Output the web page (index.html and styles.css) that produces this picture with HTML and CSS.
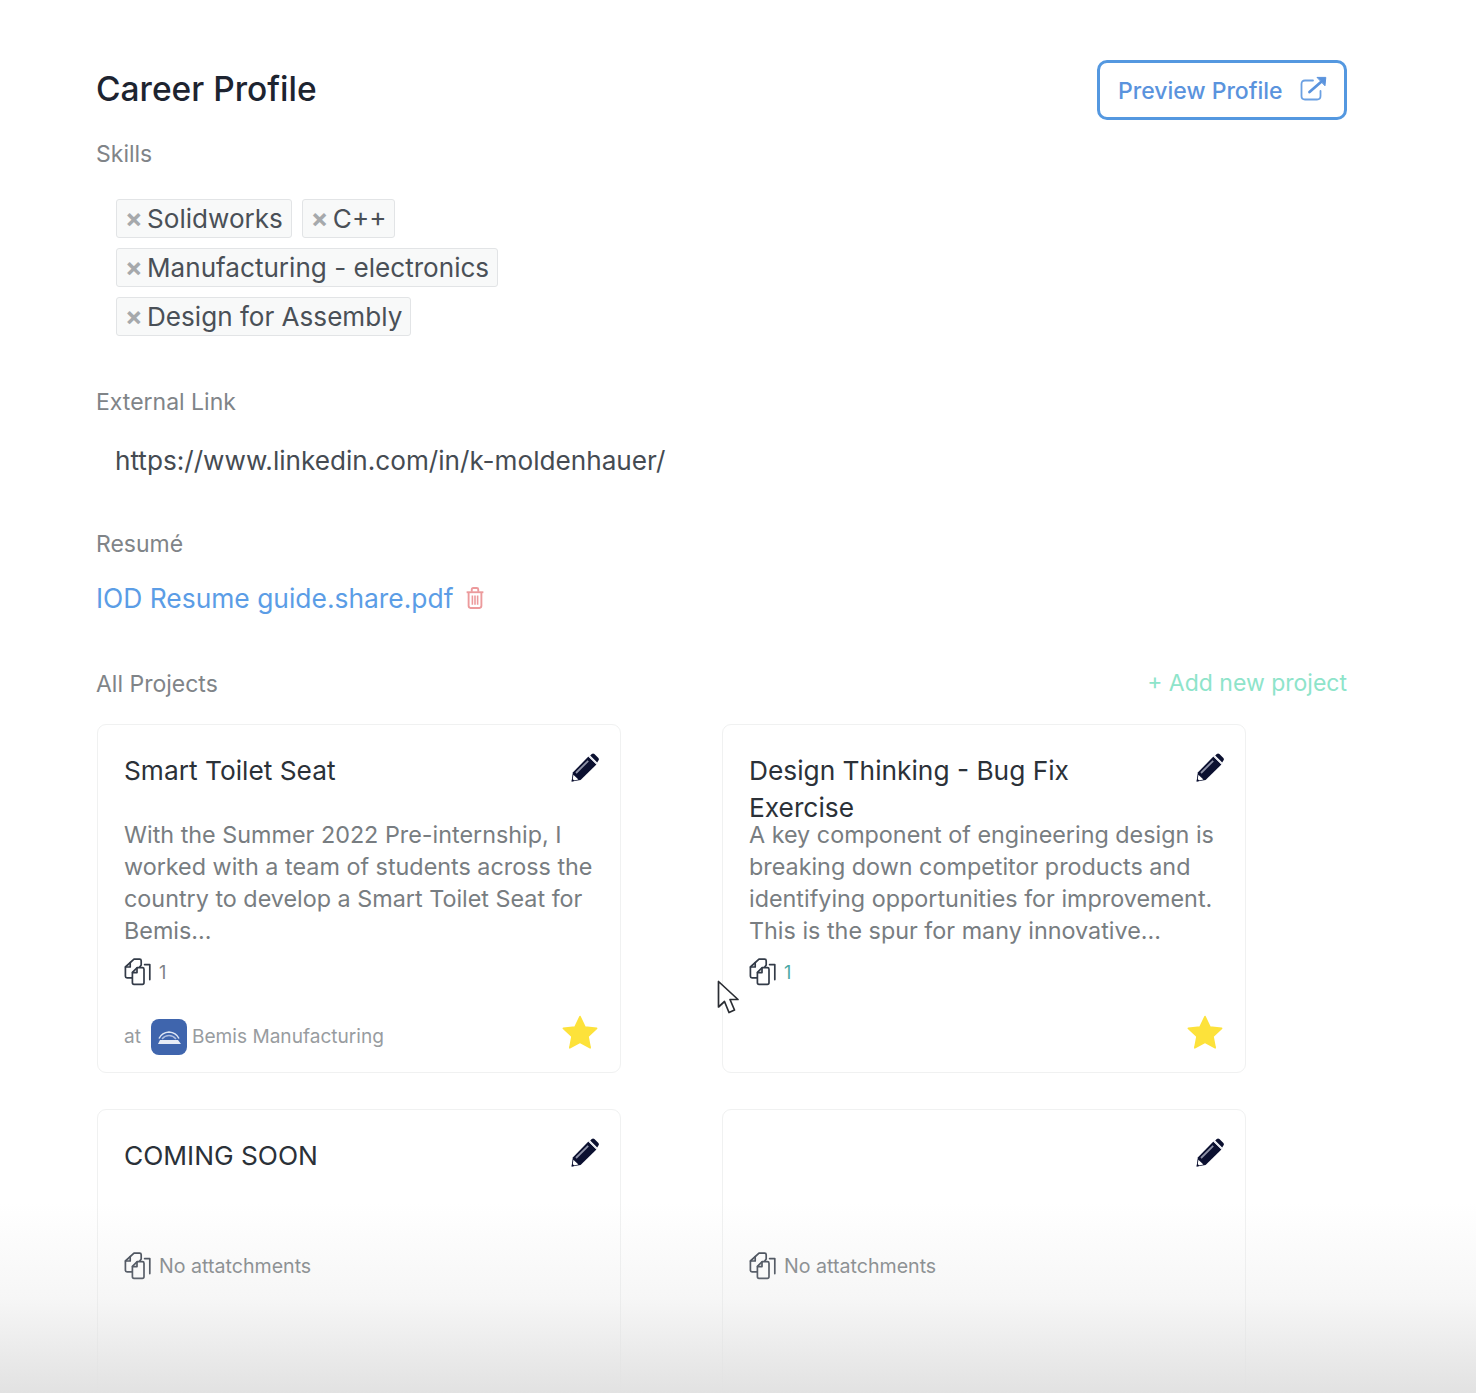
FILE: index.html
```html
<!DOCTYPE html>
<html lang="en">
<head>
<meta charset="utf-8">
<title>Career Profile</title>
<link rel="stylesheet" href="styles.css">
</head>
<body>
<svg class="defs" width="0" height="0" aria-hidden="true">
  <symbol id="pencil" viewBox="0 0 28 29">
    <path d="M0.6 28.6 L1.8 19.4 L17.4 3.6 L25.4 11.4 L9.6 27 Z" fill="#0b1030"/>
    <path d="M19.2 2.6 L20.8 1 Q22 0 23.4 1 L27.4 5 Q28.4 6.4 27.4 7.6 L26.2 9.6 Z" fill="#0b1030"/>
    <path d="M17.6 3 L26 11" stroke="#e4e6ee" stroke-width="1.2"/>
    <path d="M5 20 L17.2 7.8" stroke="#8f93a8" stroke-width="1.8"/>
    <path d="M2.4 21.8 L7.4 26.4 L1.6 27.8 Z" fill="#fff"/>
    <path d="M0.6 28.6 L1.2 25.6 L3.6 27.9 Z" fill="#0b1030"/>
  </symbol>
  <symbol id="files" viewBox="0 0 28 28">
    <g fill="none" stroke="#333b48" stroke-width="1.7" stroke-linejoin="round" stroke-linecap="round">
      <path d="M10 1.2 H15.6 Q17.2 1.2 17.2 2.8 V7 L8.2 19.8 H3 Q1.4 19.8 1.4 18.2 V9 Z" fill="#fff"/>
      <path d="M6.2 4.6 V9 H1.6"/>
      <path d="M13.2 9.6 L8.4 14.4 V24.6 Q8.4 26.4 10 26.4 H18.4 Q20 26.4 20 24.6 V11.2 Q20 9.6 18.4 9.6 Z" fill="#fff"/>
      <path d="M13 10 V14.6 H8.6"/>
      <path d="M20.6 6.6 H25.8 V21.6"/>
    </g>
  </symbol>
  <symbol id="star" viewBox="0 0 36 35">
    <path d="M18 1.5 L23 12 L34.6 13.4 L26 21.4 L28.2 32.8 L18 27.2 L7.8 32.8 L10 21.4 L1.4 13.4 L13 12 Z" fill="#fde23a" stroke="#fde23a" stroke-width="1.6" stroke-linejoin="round"/>
  </symbol>
</svg>

<main class="page">
  <header class="top">
    <h1 class="title">Career Profile</h1>
    <a class="preview" href="#">
      <span>Preview Profile</span>
      <svg class="preview-icon" viewBox="0 0 27 25" fill="none" stroke="#6ba0e2" stroke-width="1.8" stroke-linecap="round" stroke-linejoin="round">
        <path d="M13 4.5 H5 Q1.5 4.5 1.5 8 V20 Q1.5 23.5 5 23.5 H17 Q20.5 23.5 20.5 20 V15"/>
        <path d="M9.5 16 L21 6" stroke="#5a93dd" stroke-width="2.8"/>
        <path d="M17.4 1.4 L25.8 1.4 L25 9.4 Z" fill="#5a93dd" stroke="#5a93dd" stroke-width="1"/>
      </svg>
    </a>
  </header>

  <section class="skills">
    <div class="label">Skills</div>
    <div class="tags">
      <div class="tag-row">
        <span class="tag"><span class="tag-x">×</span>Solidworks</span>
        <span class="tag"><span class="tag-x">×</span>C++</span>
      </div>
      <div class="tag-row">
        <span class="tag"><span class="tag-x">×</span>Manufacturing - electronics</span>
      </div>
      <div class="tag-row">
        <span class="tag"><span class="tag-x">×</span>Design for Assembly</span>
      </div>
    </div>
  </section>

  <section class="external">
    <div class="label">External Link</div>
    <div class="url">https://www.linkedin.com/in/k-moldenhauer/</div>
  </section>

  <section class="resume">
    <div class="label">Resumé</div>
    <div class="resume-row">
      <a class="resume-link" href="#">IOD Resume guide.share.pdf</a>
      <svg class="trash" viewBox="0 0 17 21" fill="none" stroke="#ec9a9c" stroke-width="1.8" stroke-linejoin="round">
        <path d="M0.5 5 H16.5"/>
        <path d="M5.4 4.6 V2.4 Q5.4 1 6.8 1 H10.2 Q11.6 1 11.6 2.4 V4.6"/>
        <path d="M2.4 5 V18 Q2.4 20 4.2 20 H12.8 Q14.6 20 14.6 18 V5"/>
        <path d="M6 8 V17 M8.5 8 V17 M11 8 V17" stroke-width="1.5"/>
      </svg>
    </div>
  </section>

  <div class="projects-head">
    <div class="label">All Projects</div>
    <a class="add" href="#">+ Add new project</a>
  </div>

  <section class="cards">
    <article class="card">
      <div class="card-head">
        <h2 class="card-title">Smart Toilet Seat</h2>
        <svg class="pencil"><use href="#pencil"/></svg>
      </div>
      <p class="desc">With the Summer 2022 Pre-internship, I worked with a team of students across the country to develop a Smart Toilet Seat for Bemis...</p>
      <div class="attach"><svg class="files"><use href="#files"/></svg><span class="attach-count">1</span></div>
      <div class="card-foot">
        <div class="company">
          <span class="company-at">at</span>
          <svg class="logo" viewBox="0 0 36 36">
            <rect width="36" height="36" rx="8" fill="#3f65ad"/>
            <path d="M8 19.5 Q11 13.5 18 13 Q25 13.5 28 19.5" fill="none" stroke="#dfe6f4" stroke-width="1.5"/>
            <path d="M11 20 Q14 16.5 18 16.5 Q22 16.5 25 20" fill="none" stroke="#aebee0" stroke-width="1.4"/>
            <path d="M7 25 L9 21 H27 L30 25 Z" fill="#e7ecf6"/>
          </svg>
          <span>Bemis Manufacturing</span>
        </div>
        <svg class="star"><use href="#star"/></svg>
      </div>
    </article>

    <article class="card">
      <div class="card-head">
        <h2 class="card-title">Design Thinking - Bug Fix Exercise</h2>
        <svg class="pencil"><use href="#pencil"/></svg>
      </div>
      <p class="desc">A key component of engineering design is breaking down competitor products and identifying opportunities for improvement. This is the spur for many innovative...</p>
      <div class="attach"><svg class="files"><use href="#files"/></svg><span class="attach-count teal">1</span></div>
      <div class="card-foot">
        <div class="company"></div>
        <svg class="star"><use href="#star"/></svg>
      </div>
    </article>

    <article class="card">
      <div class="card-head">
        <h2 class="card-title">COMING SOON</h2>
        <svg class="pencil"><use href="#pencil"/></svg>
      </div>
      <p class="desc desc-empty"></p>
      <div class="attach"><svg class="files"><use href="#files"/></svg><span class="attach-none">No attatchments</span></div>
    </article>

    <article class="card">
      <div class="card-head">
        <h2 class="card-title"></h2>
        <svg class="pencil"><use href="#pencil"/></svg>
      </div>
      <p class="desc desc-empty"></p>
      <div class="attach"><svg class="files"><use href="#files"/></svg><span class="attach-none">No attatchments</span></div>
    </article>
  </section>
</main>

<svg class="cursor" viewBox="0 0 24 36">
  <path d="M1.5 1.5 V27 L7.5 21.5 L12 32.5 L17.5 30 L13 19.5 H21 Z" fill="#fff" stroke="#2a2d33" stroke-width="1.7" stroke-linejoin="round"/>
</svg>
<div class="fade"></div>
</body>
</html>
```
FILE: styles.css
```css
* { box-sizing: border-box; }
html, body {
  margin: 0;
  height: 1393px;
  overflow: hidden;
  background: #fff;
}
body {
  font-family: Inter, "Liberation Sans", sans-serif;
  color: #2b3138;
  position: relative;
}
.defs { position: absolute; }
.page { padding: 60px 129px 0 96px; }

.top {
  display: flex;
  justify-content: space-between;
  align-items: center;
  height: 60px;
}
.title {
  margin: -3px 0 0;
  font-size: 33.5px;
  font-weight: 500;
  color: #1d2430;
}
.preview {
  display: flex;
  align-items: center;
  gap: 18px;
  width: 250px;
  height: 60px;
  padding: 2px 0 0 18px;
  border: 3px solid #5498e0;
  border-radius: 10px;
  color: #5a93dd;
  font-size: 23px;
  font-weight: 500;
  text-decoration: none;
}
.preview-icon { width: 27px; height: 25px; margin-top: -5px; margin-left: -1px; }

.label {
  font-size: 23px;
  line-height: 28px;
  color: #808488;
}
.skills { margin-top: 20px; }
.tags {
  margin-top: 31px;
  padding-left: 20px;
  display: flex;
  flex-direction: column;
  gap: 10px;
}
.tag-row { display: flex; gap: 10px; }
.tag {
  display: flex;
  align-items: center;
  height: 39px;
  padding: 0 8px 0 9px;
  background: #f8f9f9;
  border: 1px solid #e2e4e6;
  border-radius: 3px;
  font-size: 26.1px;
  color: #4a5057;
}
.tag-x {
  width: 21px;
  margin-left: -1px;
  margin-right: 1px;
  font-size: 26px;
  font-weight: 700;
  color: #a6a9ac;
}

.external { margin-top: 52px; }
.url {
  margin-top: 28px;
  padding-left: 19px;
  font-size: 26.15px;
  line-height: 34px;
  color: #454b52;
}
.resume { margin-top: 52px; }
.resume-row {
  display: flex;
  align-items: center;
  gap: 13px;
  margin-top: 22px;
  height: 36px;
}
.resume-link {
  font-size: 26.4px;
  color: #5b9de6;
  text-decoration: none;
}
.trash { width: 18px; height: 22px; }

.projects-head {
  display: flex;
  justify-content: space-between;
  margin-top: 54px;
}
.add {
  font-size: 23px;
  line-height: 26px;
  color: #8ee4ca;
  text-decoration: none;
}

.cards {
  display: grid;
  grid-template-columns: repeat(2, 524px);
  grid-auto-rows: 349px;
  column-gap: 101px;
  row-gap: 36px;
  margin-top: 26px;
  margin-left: 1px;
}
.card {
  display: flex;
  flex-direction: column;
  padding: 27px 21px 18px 26px;
  border: 1px solid #f0f1f1;
  border-radius: 9px;
}
.card-head {
  display: flex;
  justify-content: space-between;
  align-items: flex-start;
  height: 68px;
  flex: none;
}
.card-title {
  margin: 0;
  max-width: 350px;
  font-size: 26.3px;
  line-height: 37px;
  font-weight: 400;
  color: #2b3138;
}
.pencil { width: 28px; height: 29px; margin-top: 1px; flex: none; }
.desc {
  margin: -1px 0 1px;
  height: 128px;
  flex: none;
  width: 474px;
  font-size: 23.35px;
  line-height: 32px;
  color: #787d81;
}
.desc-empty { height: 37px; }
.attach {
  display: flex;
  align-items: center;
  gap: 7px;
  height: 32px;
  margin-top: 8px;
  flex: none;
}
.files { width: 28px; height: 28px; }
.attach-count { font-size: 18px; color: #7c8185; }
.attach-count.teal { color: #4aa8a3; }
.attach-none { font-size: 19.6px; color: #787d81; }
.card-foot {
  display: flex;
  justify-content: space-between;
  align-items: center;
  margin-top: auto;
  height: 36px;
}
.company {
  display: flex;
  align-items: center;
  gap: 5px;
  font-size: 19.1px;
  line-height: 30px;
  color: #989ca0;
}
.company-at { margin-right: 5px; }
.logo { width: 36px; height: 36px; margin-top: 2px; }
.star { width: 36px; height: 35px; margin-bottom: 7px; margin-right: 1px; }

.cursor {
  position: absolute;
  left: 717px;
  top: 980px;
  width: 24px;
  height: 36px;
}
.fade {
  position: absolute;
  left: 0;
  right: 0;
  bottom: 0;
  height: 190px;
  background: linear-gradient(to bottom, rgba(226,226,226,0), rgba(226,226,226,0.3) 50%, rgba(226,226,226,1));
  pointer-events: none;
}
```
